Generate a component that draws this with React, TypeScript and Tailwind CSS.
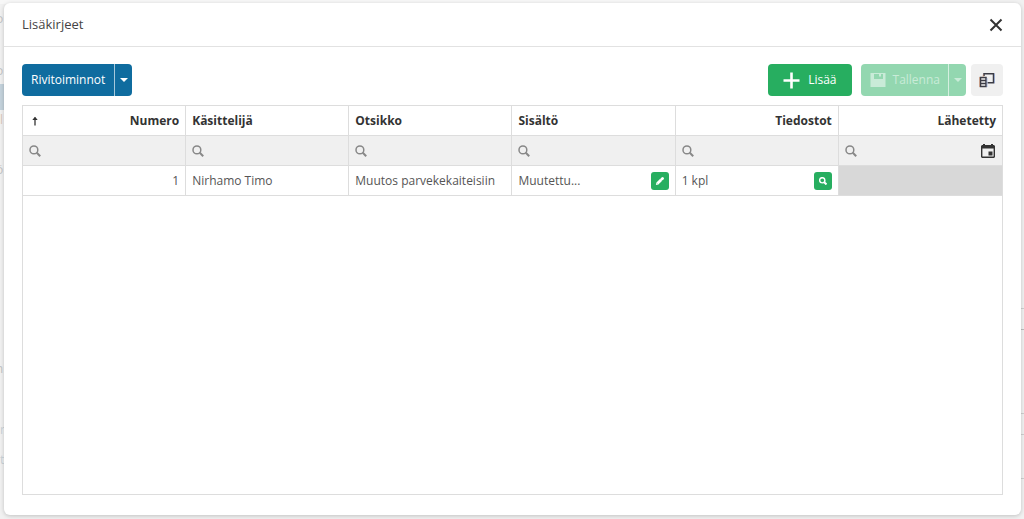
import React from "react";

type Column = { id: string; title: string; align: "left" | "right"; sorted?: boolean; date?: boolean };

const columns: Column[] = [
  { id: "numero", title: "Numero", align: "right", sorted: true },
  { id: "kasittelija", title: "Käsittelijä", align: "left" },
  { id: "otsikko", title: "Otsikko", align: "left" },
  { id: "sisalto", title: "Sisältö", align: "left" },
  { id: "tiedostot", title: "Tiedostot", align: "right" },
  { id: "lahetetty", title: "Lähetetty", align: "right", date: true },
];

function SearchIcon({ className, bold }: { className: string; bold?: boolean }) {
  return (
    <svg viewBox="0 0 12 12" className={className} fill="none" stroke="currentColor" aria-hidden="true">
      <circle cx="4.9" cy="4.9" r="3.9" strokeWidth={bold ? 2.2 : 1.5} />
      <path d="M7.8 7.8 11.2 11.2" strokeWidth={bold ? 3 : 2} />
    </svg>
  );
}

function CaretIcon() {
  return (
    <svg viewBox="0 0 8 4" className="h-1 w-2" fill="currentColor" aria-hidden="true">
      <path d="M0 0h8L4 4z" />
    </svg>
  );
}

function PlusIcon() {
  return (
    <svg viewBox="0 0 17 17" className="size-[17px]" fill="none" stroke="currentColor" strokeWidth="2.6" aria-hidden="true">
      <path d="M8.5 0.5v16M0.5 8.5h16" />
    </svg>
  );
}

function SaveIcon() {
  return (
    <svg viewBox="0 0 16 16" className="size-4" fill="currentColor" aria-hidden="true">
      <path fillRule="evenodd" d="M0.5 1h15v14h-15zM4 1v6h9V1h-2v3.5H9V1z" />
      <path d="M4 1h9v1H4z" />
    </svg>
  );
}

function ColumnsIcon() {
  return (
    <svg viewBox="0 0 16 16" className="size-4" fill="none" stroke="#3c3c46" strokeWidth="1.5" aria-hidden="true">
      <path d="M5 4V1.8h9.5v9H8.5" />
      <path d="M1.5 5.5h5.5v9H1.5zM1.5 8.5H7M1.5 11.5H7" />
      <path d="M0.5 5v10M4.2 2.5V5" stroke="#c9794f" strokeWidth="0.5" />
      <path d="M15.5 1.5v9.8M8 6v9" stroke="#6f8fd0" strokeWidth="0.5" />
    </svg>
  );
}

function CalendarIcon() {
  return (
    <svg viewBox="0 0 16 16" className="size-4" fill="#333333" aria-hidden="true">
      <path fillRule="evenodd" d="M3 1h2v1h6V1h2v1h1l1 1v11l-1 1H2l-1-1V3l1-1h1zM2.4 5.4v8.2h11.2V5.4z" />
      <path d="M8.5 8.5h4v4h-4z" />
    </svg>
  );
}

function PencilIcon() {
  return (
    <svg viewBox="0 0 10 10" className="size-[10px]" fill="none" stroke="currentColor" aria-hidden="true">
      <path d="M2.4 7.6L6.2 3.8" strokeWidth="2.8" />
      <path d="M6.9 3.1L7.6 2.4" strokeWidth="2.8" strokeLinecap="round" />
      <path d="M0.9 9.1l.5-2.6 2.1 2.1z" fill="currentColor" stroke="none" />
    </svg>
  );
}

function PageBehind() {
  return (
    <div aria-hidden="true" className="absolute inset-0 overflow-hidden bg-[#f1f1f1] text-[12px] leading-4 text-[#c4c4c4]">
      <div className="absolute left-0 top-0 h-1 w-[840px] bg-[#f7f7f7]" />
      <div className="absolute left-0 top-[84px] h-[26px] w-2 bg-[#c4d2dc]" />
      <span className="absolute left-0 top-[11px] -indent-1">o</span>
      <span className="absolute left-0 top-[63px] -indent-1">o</span>
      <span className="absolute left-0 top-[112px] text-[#dcc8ba]">l</span>
      <span className="absolute left-0 top-[162px] -indent-1">ö</span>
      <span className="absolute left-0 top-[361px] -indent-2">m</span>
      <span className="absolute left-0 top-[422px] text-[#cbd3d8]">r</span>
      <span className="absolute left-0 top-[452px] text-[#cbd3d8]">t</span>
      <div className="absolute right-0 top-[308px] h-px w-1 bg-[#cfcfcf]" />
      <div className="absolute right-0 top-[329px] h-px w-1 bg-[#bdbdbd]" />
      <div className="absolute right-0 top-[413px] h-px w-1 bg-[#cfcfcf]" />
      <div className="absolute right-0 top-[434px] h-px w-1 bg-[#cfcfcf]" />
      <div className="absolute right-0 top-[478px] h-px w-1 bg-[#cfcfcf]" />
    </div>
  );
}

const cell = "border-r border-b border-[#dddddd] px-1.5 last:border-r-0";
const chip = "flex size-[18px] shrink-0 items-center justify-center rounded-[3px] bg-[#27ae60] text-white";

export default function App() {
  return (
    <div className="relative flex min-h-screen flex-col pt-[3px] pr-[3px] pb-1 pl-1 font-['Open_Sans','Noto_Sans',sans-serif] text-[12px] text-[#555555]">
      <PageBehind />
      <section
        role="dialog"
        aria-labelledby="dialog-title"
        className="relative flex grow flex-col rounded-md bg-white shadow-[0_1px_4px_rgba(0,0,0,0.2)]"
      >
        <header className="flex h-11 items-center justify-between border-b border-[#e2e2e2] px-[18px]">
          <h1 id="dialog-title" className="text-[13px] text-[#444444]">Lisäkirjeet</h1>
          <button type="button" aria-label="Sulje" className="text-[#333333]">
            <svg viewBox="0 0 14 14" className="size-[14px]" fill="none" stroke="currentColor" strokeWidth="2" aria-hidden="true">
              <path d="M1.5 1.5l11 11M12.5 1.5l-11 11" />
            </svg>
          </button>
        </header>

        <div className="flex grow flex-col px-[18px] pt-[17px] pb-5">
          <div className="flex h-8 items-stretch justify-between">
            <div className="flex overflow-hidden rounded-[4px] bg-[#0f6c9f] text-white">
              <button type="button" className="px-[9px]">Rivitoiminnot</button>
              <button type="button" aria-label="Lisää rivitoimintoja" className="flex w-[18px] items-center justify-center border-l border-[#a5c8db]">
                <CaretIcon />
              </button>
            </div>
            <div className="flex">
              <button type="button" className="flex items-center gap-2 rounded-[4px] bg-[#27ae60] px-[15px] text-white">
                <PlusIcon />
                Lisää
              </button>
              <div className="ml-[9px] flex overflow-hidden rounded-[4px] bg-[#93d7b0] text-[#c9ebd8]">
                <button type="button" disabled className="flex items-center gap-[7px] pr-2 pl-[9px]">
                  <SaveIcon />
                  Tallenna
                </button>
                <button type="button" disabled aria-label="Tallennusvaihtoehdot" className="flex w-[18px] items-center justify-center border-l border-[#d5efe0]">
                  <CaretIcon />
                </button>
              </div>
              <button type="button" aria-label="Sarakkeet" className="ml-[5px] flex w-8 items-center justify-center rounded-[4px] bg-[#f0f0f0]">
                <ColumnsIcon />
              </button>
            </div>
          </div>

          <div className="mt-[9px] grow border border-[#dddddd]">
            <table className="w-full table-fixed border-separate border-spacing-0">
              <thead>
                <tr className="h-[30px] text-[#333333]">
                  {columns.map((c) => (
                    <th key={c.id} scope="col" className={cell}>
                      <div className="flex items-center justify-between">
                        {c.sorted && (
                          <svg viewBox="0 0 8 10" className="ml-0.5 h-[10px] w-2" fill="none" stroke="currentColor" strokeWidth="1.3" aria-hidden="true">
                            <path d="M4 9.5V1.5" />
                            <path d="M1.3 4L4 0.8 6.7 4z" fill="currentColor" stroke="none" />
                          </svg>
                        )}
                        <span className={c.align === "right" ? "ml-auto" : ""}>{c.title}</span>
                      </div>
                    </th>
                  ))}
                </tr>
                <tr className="h-[30px] bg-[#f0f0f0]">
                  {columns.map((c) => (
                    <td key={c.id} className={cell}>
                      <div className="flex items-center gap-1">
                        <label htmlFor={c.id} className="text-[#888888]">
                          <SearchIcon className="size-3" />
                        </label>
                        <input id={c.id} type="text" aria-label={c.title} className="h-6 min-w-0 grow bg-transparent outline-none" />
                        {c.date && (
                          <button type="button" aria-label="Valitse päivä">
                            <CalendarIcon />
                          </button>
                        )}
                      </div>
                    </td>
                  ))}
                </tr>
              </thead>
              <tbody>
                <tr className="h-[30px]">
                  <td className={`${cell} text-right`}>1</td>
                  <td className={cell}>Nirhamo Timo</td>
                  <td className={`${cell} whitespace-nowrap`}>Muutos parvekekaiteisiin</td>
                  <td className={cell}>
                    <div className="flex items-center justify-between">
                      <span>Muutettu...</span>
                      <button type="button" aria-label="Muokkaa sisältöä" className={chip}>
                        <PencilIcon />
                      </button>
                    </div>
                  </td>
                  <td className={cell}>
                    <div className="flex items-center justify-between">
                      <span>1 kpl</span>
                      <button type="button" aria-label="Näytä tiedostot" className={chip}>
                        <SearchIcon className="size-2" bold />
                      </button>
                    </div>
                  </td>
                  <td className={`${cell} bg-[#d8d8d8]`} />
                </tr>
              </tbody>
            </table>
          </div>
        </div>
      </section>
    </div>
  );
}
